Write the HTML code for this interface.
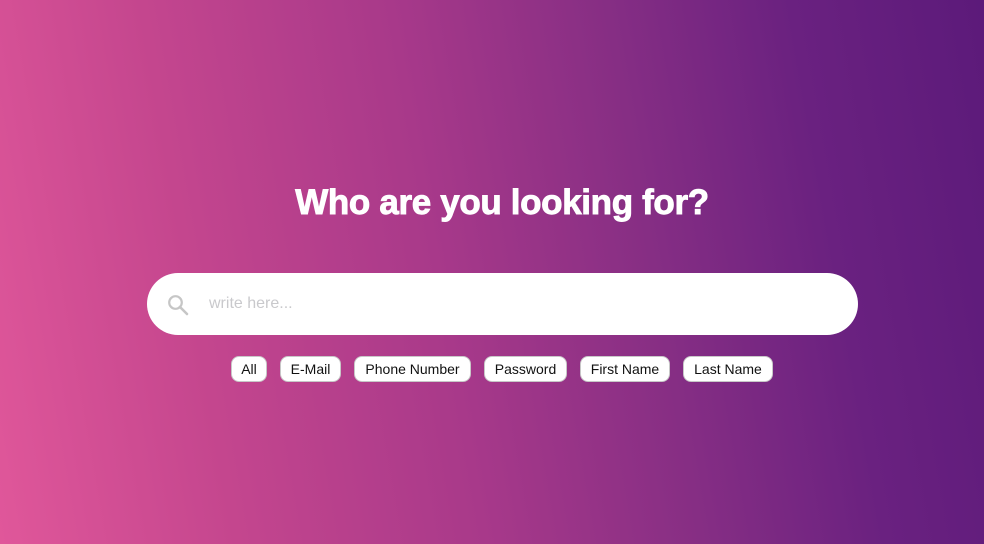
<!DOCTYPE html>
<html><head><meta charset="utf-8"><style>
html,body{margin:0;padding:0;width:984px;height:544px;overflow:hidden}
body{background:linear-gradient(80deg,#e0579a 0%,#c4468e 22%,#a8398a 45%,#862e84 65%,#6a2180 82%,#5c1a7a 100%);font-family:"Liberation Sans",Arial,sans-serif;position:relative}
h1{position:absolute;left:10px;width:984px;top:181px;margin:0;text-align:center;color:#fff;font-size:35px;font-weight:bold;letter-spacing:-0.35px;line-height:44px;-webkit-text-stroke:0.9px #fff}
.search{position:absolute;left:147px;top:273px;width:711px;height:62px;background:#fff;border-radius:31px}
.ph{position:absolute;left:62px;top:22px;font-size:16px;color:#c9c9cc}
.chip{position:absolute;top:356px;height:24px;line-height:24px;background:#fff;border:1px solid #c8c8c8;border-radius:8px;font-size:14px;color:#111;text-align:center;box-sizing:content-box}
</style></head><body>
<h1>Who are you looking for?</h1>
<div class="search"><div class="ph">write here...</div></div>
<svg style="position:absolute;left:167px;top:294px" width="22" height="22" viewBox="0 0 22 22"><circle cx="8.5" cy="8.5" r="6.3" fill="none" stroke="#c6c6c6" stroke-width="2.2"/><line x1="13" y1="13" x2="20" y2="20" stroke="#c6c6c6" stroke-width="2.6" stroke-linecap="round"/></svg>
<div class="chip" style="left:231px;width:34px">All</div>
<div class="chip" style="left:280px;width:59px">E-Mail</div>
<div class="chip" style="left:354px;width:115px">Phone Number</div>
<div class="chip" style="left:484px;width:81px">Password</div>
<div class="chip" style="left:580px;width:88px">First Name</div>
<div class="chip" style="left:683px;width:88px">Last Name</div>
</body></html>
